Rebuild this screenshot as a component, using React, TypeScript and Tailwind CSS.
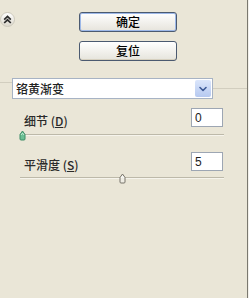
import { ChevronDown } from "lucide-react";

const cjk = { fontFamily: '"Noto Sans CJK SC", "Noto Sans", sans-serif' };

function XpButton({ label, isDefault = false }: { label: string; isDefault?: boolean }) {
  return (
    <button
      className={`w-[98px] h-[20px] rounded-[3px] border border-[#4b5a70] text-[12px] font-medium leading-none text-black bg-gradient-to-b from-white to-[#e6e4dc] ${
        isDefault ? "shadow-[inset_0_0_0_1px_#9db8e8]" : "shadow-[inset_0_-1px_0_#d6d0bf]"
      }`}
      style={cjk}
    >
      {label}
    </button>
  );
}

function Thumb({ active = false }: { active?: boolean }) {
  return (
    <svg width="7" height="11" viewBox="0 0 7 11" className="block">
      <path
        d="M1 4.5 L3.5 1 L6 4.5 V9 Q6 10 5 10 H2 Q1 10 1 9 Z"
        fill={active ? "#6cbf94" : "#efede4"}
        stroke={active ? "#3d8c66" : "#77736a"}
        strokeWidth="1"
      />
      <path d="M2.2 5 L3.5 3 L4.8 5" fill="none" stroke={active ? "#c9f0da" : "#ffffff"} strokeWidth="0.8" />
    </svg>
  );
}

function Slider({ percent, active = false }: { percent: number; active?: boolean }) {
  return (
    <div className="relative ml-[20px] w-[204px] h-[11px]">
      <div className="absolute left-0 right-0 top-[4px] h-[2px] bg-[#bdb9a9] border-b border-[#f6f4ec]" />
      <div className="absolute top-0" style={{ left: `calc(${percent}% - 3px)` }}>
        <Thumb active={active} />
      </div>
    </div>
  );
}

function FieldRow({ label, hotkey, value }: { label: string; hotkey: string; value: string }) {
  return (
    <div className="flex items-center">
      <span className="ml-[24px] mt-[6px] text-[12px] font-medium leading-none text-[#2a2a2a]" style={cjk}>
        {label} (<span className="underline">{hotkey}</span>)
      </span>
      <div
        className="ml-auto mr-[24px] w-[32px] h-[19px] bg-white border border-[#9da6b3] flex items-center pl-[3px] text-[12px] text-[#222]"
        style={{ fontFamily: '"Liberation Sans", sans-serif' }}
      >
        {value}
      </div>
    </div>
  );
}

export default function App() {
  return (
    <div className="w-[249px] h-[298px] bg-[#f3f1ea]">
      <div className="w-[248px] h-[298px] bg-[#eae6d7] border-r border-[#7a786f] flex flex-col overflow-hidden">
        <div className="flex pt-[12px]">
          <div className="w-[15px] h-[15px] rounded-full bg-gradient-to-b from-white to-[#dcd8cc] border border-[#cdc9bc] flex items-center justify-center">
            <svg width="9" height="9" viewBox="0 0 9 9">
              <path d="M1.2 4.6 L4.5 1.4 L7.8 4.6 M1.2 8 L4.5 4.8 L7.8 8" fill="none" stroke="#2b2b2b" strokeWidth="1.7" />
            </svg>
          </div>
          <div className="ml-[64px] flex flex-col gap-[9px]">
            <XpButton label="确定" isDefault />
            <XpButton label="复位" />
          </div>
        </div>

        <div className="flex mt-[17px]">
          <div className="w-[12px] mt-[4px] border-t border-[#d2cebf] self-start" />
          <div className="w-[201px] h-[21px] bg-white border border-[#a7b3c4] flex items-center">
            <span className="pl-[3px] text-[12px] font-medium leading-none text-[#222]" style={cjk}>
              铬黄渐变
            </span>
            <div className="ml-auto mr-[1px] w-[16px] h-[17px] rounded-[2px] bg-gradient-to-b from-[#dbe6fb] to-[#b6c9f0] flex items-center justify-center">
              <ChevronDown size={12} strokeWidth={3.2} color="#3d5a96" />
            </div>
          </div>
          <div className="flex-1 mt-[10px] border-t border-[#d2cebf] self-start" />
        </div>

        <div className="mt-[9px]">
          <FieldRow label="细节" hotkey="D" value="0" />
        </div>
        <div className="mt-[3px]">
          <Slider percent={1} active />
        </div>

        <div className="mt-[11px]">
          <FieldRow label="平滑度" hotkey="S" value="5" />
        </div>
        <div className="mt-[2px]">
          <Slider percent={50} />
        </div>
      </div>
    </div>
  );
}
